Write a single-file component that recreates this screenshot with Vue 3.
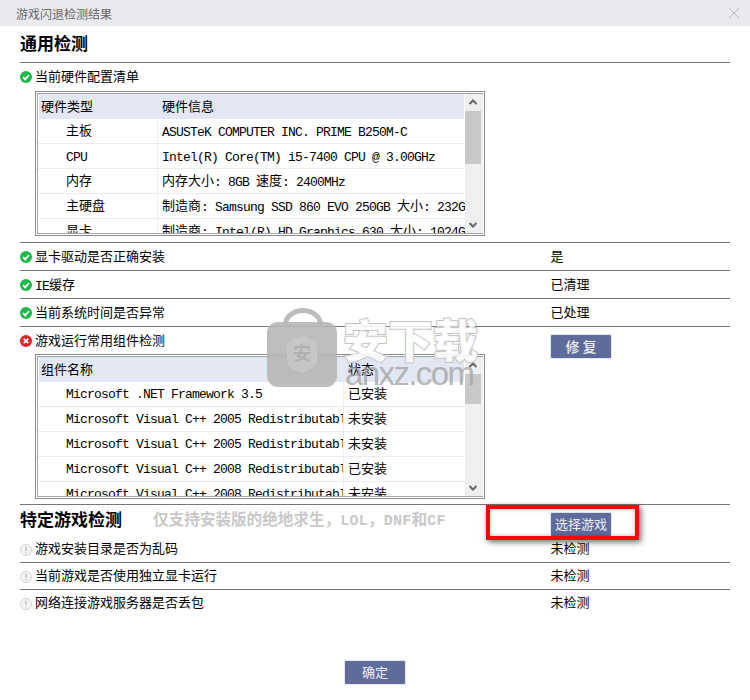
<script setup>
const hardware = [
  ['主板', 'ASUSTeK COMPUTER INC. PRIME B250M-C'],
  ['CPU', 'Intel(R) Core(TM) i5-7400 CPU @ 3.00GHz'],
  ['内存', '内存大小: 8GB 速度: 2400MHz'],
  ['主硬盘', '制造商: Samsung SSD 860 EVO 250GB 大小: 232GB'],
  ['显卡', '制造商: Intel(R) HD Graphics 630 大小: 1024GB']
]

const components = [
  ['Microsoft .NET Framework 3.5', '已安装'],
  ['Microsoft Visual C++ 2005 Redistributable', '未安装'],
  ['Microsoft Visual C++ 2005 Redistributable', '未安装'],
  ['Microsoft Visual C++ 2008 Redistributable', '已安装'],
  ['Microsoft Visual C++ 2008 Redistributable', '未安装']
]

const generalRows = [
  ['显卡驱动是否正确安装', '是'],
  ['IE缓存', '已清理'],
  ['当前系统时间是否异常', '已处理']
]

const gameRows = ['游戏安装目录是否为乱码', '当前游戏是否使用独立显卡运行', '网络连接游戏服务器是否丢包']

// latin runs are narrower than the cjk ones in this dialog
const parts = (text) =>
  text.match(/[ -~]+|[^ -~]+/g).map((t) => ({ t, latin: /^[ -~]/.test(t) }))
</script>

<template>
  <div class="dialog">
    <div class="titlebar">
      <span>游戏闪退检测结果</span>
      <svg class="close" width="12" height="12" viewBox="0 0 12 12">
        <path d="M1 1L11 11M11 1L1 11" stroke="#b9bbc0" stroke-width="1" fill="none" />
      </svg>
    </div>

    <div class="content">
      <h2 class="heading first">通用检测</h2>

      <div class="block">
        <div class="label tall">
          <svg class="icon" viewBox="0 0 12 12">
            <circle cx="6" cy="6" r="6" fill="#1fb84a" />
            <path d="M3 6.2L5.2 8.4L9 4" stroke="#fff" stroke-width="1.8" fill="none" />
          </svg>
          <span class="text">当前硬件配置清单</span>
        </div>
        <div class="table hw">
          <div class="inner">
            <div class="grid">
              <div class="head">
                <span class="col1">硬件类型</span>
                <span class="col2">硬件信息</span>
              </div>
              <div class="line" v-for="row in hardware" :key="row[0]">
                <div class="col1 indent">
                  <span v-for="(p, i) in parts(row[0])" :key="i" :class="{ latin: p.latin }">{{ p.t }}</span>
                </div>
                <div class="col2">
                  <span v-for="(p, i) in parts(row[1])" :key="i" :class="{ latin: p.latin }">{{ p.t }}</span>
                </div>
              </div>
            </div>
            <div class="scrollbar">
              <svg class="arrow" viewBox="0 0 16 17">
                <path d="M4.5 10L8 6.5L11.5 10" stroke="#666" stroke-width="2" fill="none" />
              </svg>
              <div class="thumb hw-thumb"></div>
              <div class="track"></div>
              <svg class="arrow" viewBox="0 0 16 17">
                <path d="M4.5 7L8 10.5L11.5 7" stroke="#666" stroke-width="2" fill="none" />
              </svg>
            </div>
          </div>
        </div>
      </div>

      <div class="row" v-for="row in generalRows" :key="row[0]">
        <div class="label">
          <svg class="icon" viewBox="0 0 12 12">
            <circle cx="6" cy="6" r="6" fill="#1fb84a" />
            <path d="M3 6.2L5.2 8.4L9 4" stroke="#fff" stroke-width="1.8" fill="none" />
          </svg>
          <span class="text">
            <span v-for="(p, i) in parts(row[0])" :key="i" :class="{ latin: p.latin }">{{ p.t }}</span>
          </span>
        </div>
        <div class="status">{{ row[1] }}</div>
      </div>

      <div class="block split">
        <div>
          <div class="label">
            <svg class="icon" viewBox="0 0 12 12">
              <circle cx="6" cy="6" r="6" fill="#e8212b" />
              <path d="M3.8 3.8L8.2 8.2M8.2 3.8L3.8 8.2" stroke="#fff" stroke-width="1.8" fill="none" />
            </svg>
            <span class="text">游戏运行常用组件检测</span>
          </div>
          <div class="table comp">
            <div class="inner">
              <div class="grid">
                <div class="head">
                  <span class="col1">组件名称</span>
                  <span class="col2">状态</span>
                </div>
                <div class="line" v-for="(row, n) in components" :key="n">
                  <div class="col1 indent"><span class="latin">{{ row[0] }}</span></div>
                  <div class="col2">{{ row[1] }}</div>
                </div>
              </div>
              <div class="scrollbar">
                <svg class="arrow" viewBox="0 0 16 17">
                  <path d="M4.5 10L8 6.5L11.5 10" stroke="#666" stroke-width="2" fill="none" />
                </svg>
                <div class="thumb comp-thumb"></div>
                <div class="track"></div>
                <svg class="arrow" viewBox="0 0 16 17">
                  <path d="M4.5 7L8 10.5L11.5 7" stroke="#666" stroke-width="2" fill="none" />
                </svg>
              </div>
            </div>
          </div>
        </div>
        <div class="action">
          <button class="btn spaced">修 复</button>
        </div>
      </div>

      <div class="game-head">
        <div class="game-title">
          <h2 class="heading">特定游戏检测</h2>
          <span class="hint">仅支持安装版的绝地求生，<span class="hint-latin">LOL</span>，<span class="hint-latin">DNF</span>和<span class="hint-latin">CF</span></span>
        </div>
        <div class="action-head">
          <button class="btn">选择游戏</button>
        </div>
        <div class="redbox"></div>
      </div>

      <div class="row game" v-for="(text, n) in gameRows" :key="text" :class="{ last: n === gameRows.length - 1 }">
        <div class="label">
          <svg class="icon" viewBox="0 0 12 12">
            <circle cx="6" cy="6" r="5.5" fill="#f4f4f4" stroke="#d4d4d4" />
            <path d="M6 2.8V7M6 8.2V9.6" stroke="#c4c4c4" stroke-width="1.6" fill="none" />
          </svg>
          <span class="text">{{ text }}</span>
        </div>
        <div class="status">未检测</div>
      </div>

      <div class="footer">
        <button class="btn">确定</button>
      </div>
    </div>

    <div class="watermark">
      <svg class="wm-lock" width="72" height="82" viewBox="0 0 72 82">
        <path d="M18 20C18 -2 54 -2 54 20" stroke="#bcbcbc" stroke-width="5" fill="none" />
        <rect x="0" y="15" width="70" height="65" rx="11" fill="#b6b6b6" fill-opacity="0.9" />
        <path d="M20 34L35 29L50 34V52C50 60 43 63 35 66C27 63 20 60 20 52Z" fill="#c6c6c6" />
      </svg>
      <span class="wm-shield-text">安</span>
      <span class="wm-title">安下载</span>
      <span class="wm-url">anxz.com</span>
    </div>
  </div>
</template>

<style scoped>
.dialog {
  position: relative;
  width: 750px;
  height: 700px;
  overflow: hidden;
  background: #fff;
  color: #000;
  font-family: 'Noto Sans CJK SC', 'Liberation Sans', sans-serif;
  font-size: 13px;
}

.titlebar {
  height: 26px;
  padding: 0 10px 0 16px;
  display: flex;
  align-items: center;
  justify-content: space-between;
  background: #e9eaee;
  color: #666;
  font-size: 12px;
}

.content {
  padding: 0 20px;
}

.heading {
  margin: 0;
  font-size: 17px;
  font-weight: 700;
  line-height: 24px;
}

.heading.first {
  height: 37px;
  padding-top: 5px;
  box-sizing: border-box;
  border-bottom: 1px solid #777;
}

.latin {
  font-family: 'Liberation Mono', monospace;
  font-size: 13px;
  letter-spacing: -0.8px;
  vertical-align: -1px;
}

.comp .latin {
  vertical-align: baseline;
}

.label {
  display: flex;
  align-items: center;
  gap: 3px;
  height: 27px;
  white-space: nowrap;
}

.label.tall {
  margin-bottom: 1px;
}

.text,
.status {
  position: relative;
  top: -1px;
}

.game .text,
.game .status {
  top: -2px;
}

.status {
  margin-left: -0.5px;
}

.icon {
  width: 12px;
  height: 12px;
  flex: none;
}

.block {
  padding-bottom: 6px;
  border-bottom: 1px solid #777;
}

.block.split {
  display: grid;
  grid-template-columns: 531px 1fr;
  padding-bottom: 5px;
}

.action {
  padding-top: 8px;
}

.row {
  display: grid;
  grid-template-columns: 531px 1fr;
  align-items: center;
  height: 28px;
  box-sizing: border-box;
  border-bottom: 1px solid #777;
}

.row.game {
  height: 27px;
}

.row.last {
  border-bottom: none;
}

.table {
  width: 450px;
  height: 145px;
  margin-left: 15px;
  box-sizing: border-box;
  border: 1px solid #8c8c8c;
  padding: 1px;
}

.inner {
  display: flex;
  height: 100%;
  box-sizing: border-box;
  border: 1px solid #a4a4a4;
  border-right: none;
  background: #fff;
}

.grid {
  flex: 1;
  min-width: 0;
  overflow: hidden;
}

.head {
  display: flex;
  align-items: center;
  height: 25px;
  padding-bottom: 2px;
  box-sizing: border-box;
  line-height: 22px;
  margin-left: 1px;
  margin-right: 1px;
  background: #e3e7f3;
}

.line {
  display: flex;
  align-items: center;
  height: 25px;
  box-sizing: border-box;
  border-bottom: 1px solid #ececec;
}

.col1,
.col2 {
  white-space: nowrap;
  overflow: hidden;
  box-sizing: border-box;
}

.hw .col1 {
  width: 120px;
  flex: none;
}

.comp .col1 {
  width: 306px;
  flex: none;
}

.head .col1 {
  padding-left: 2px;
  height: 22px;
}

.head .col2 {
  padding-left: 3px;
  height: 22px;
}

.line .col1 {
  height: 24px;
  line-height: 22px;
  padding-left: 28px;
  border-right: 1px solid #ececec;
}

.line .col2 {
  flex: 1;
  height: 24px;
  padding-left: 4px;
  line-height: 22px;
}

.scrollbar {
  width: 18px;
  flex: none;
  display: flex;
  flex-direction: column;
  background: #efefef;
}

.arrow {
  width: 16px;
  height: 17px;
  flex: none;
}

.thumb {
  width: 16px;
  background: #c8c8c8;
}

.hw-thumb {
  height: 53px;
}

.comp-thumb {
  height: 30px;
}

.track {
  flex: 1;
}

.btn {
  display: block;
  width: 60px;
  height: 23px;
  padding: 0 0 2px;
  border: none;
  border-radius: 1px;
  background: #5f6b9b;
  box-shadow: 0 0 0 1px #e3e6f0;
  color: #eef0f6;
  font-family: inherit;
  font-size: 13px;
  line-height: 20px;
}

.btn.spaced {
  font-size: 14px;
  font-weight: 500;
}

.game-head {
  position: relative;
  display: grid;
  grid-template-columns: 531px 1fr;
  height: 31px;
}

.game-title {
  display: flex;
  align-items: center;
  gap: 31px;
  white-space: nowrap;
  padding-bottom: 4px;
  box-sizing: border-box;
}

.hint {
  color: #c8c8c8;
  font-size: 15.6px;
  font-weight: 700;
}

.hint-latin {
  font-family: 'Liberation Mono', monospace;
  font-size: 15px;
  letter-spacing: 0.3px;
}

.action-head {
  padding-top: 8px;
}

.redbox {
  position: absolute;
  left: 466px;
  top: 0;
  width: 153px;
  height: 35px;
  box-sizing: border-box;
  border: 4px solid #fa0505;
  box-shadow: 2px 2px 6px rgba(0, 0, 0, 0.6), inset 0 0 4px rgba(0, 0, 0, 0.3);
  pointer-events: none;
}

.footer {
  display: flex;
  justify-content: center;
  margin-top: 44px;
}

.watermark {
  position: absolute;
  left: 267px;
  top: 307px;
  width: 220px;
  height: 84px;
  pointer-events: none;
}

.wm-lock {
  position: absolute;
  left: 0;
  top: 0;
}

.wm-shield-text {
  position: absolute;
  left: 26px;
  top: 34px;
  color: #b0b0b0;
  font-size: 18px;
  line-height: 22px;
  font-weight: 700;
}

.wm-title {
  position: absolute;
  left: 76px;
  top: 7px;
  color: rgba(255, 255, 255, 0.9);
  font-size: 45px;
  line-height: 50px;
  font-weight: 900;
  -webkit-text-stroke: 2px #c6c6c6;
  paint-order: stroke fill;
  white-space: nowrap;
}

.wm-url {
  position: absolute;
  left: 78px;
  top: 52px;
  color: rgba(165, 165, 165, 0.8);
  font-family: 'Liberation Sans', sans-serif;
  font-size: 33px;
  letter-spacing: -1.6px;
  line-height: 30px;
  white-space: nowrap;
}
</style>

<style>
body {
  background: #fff;
}
</style>
